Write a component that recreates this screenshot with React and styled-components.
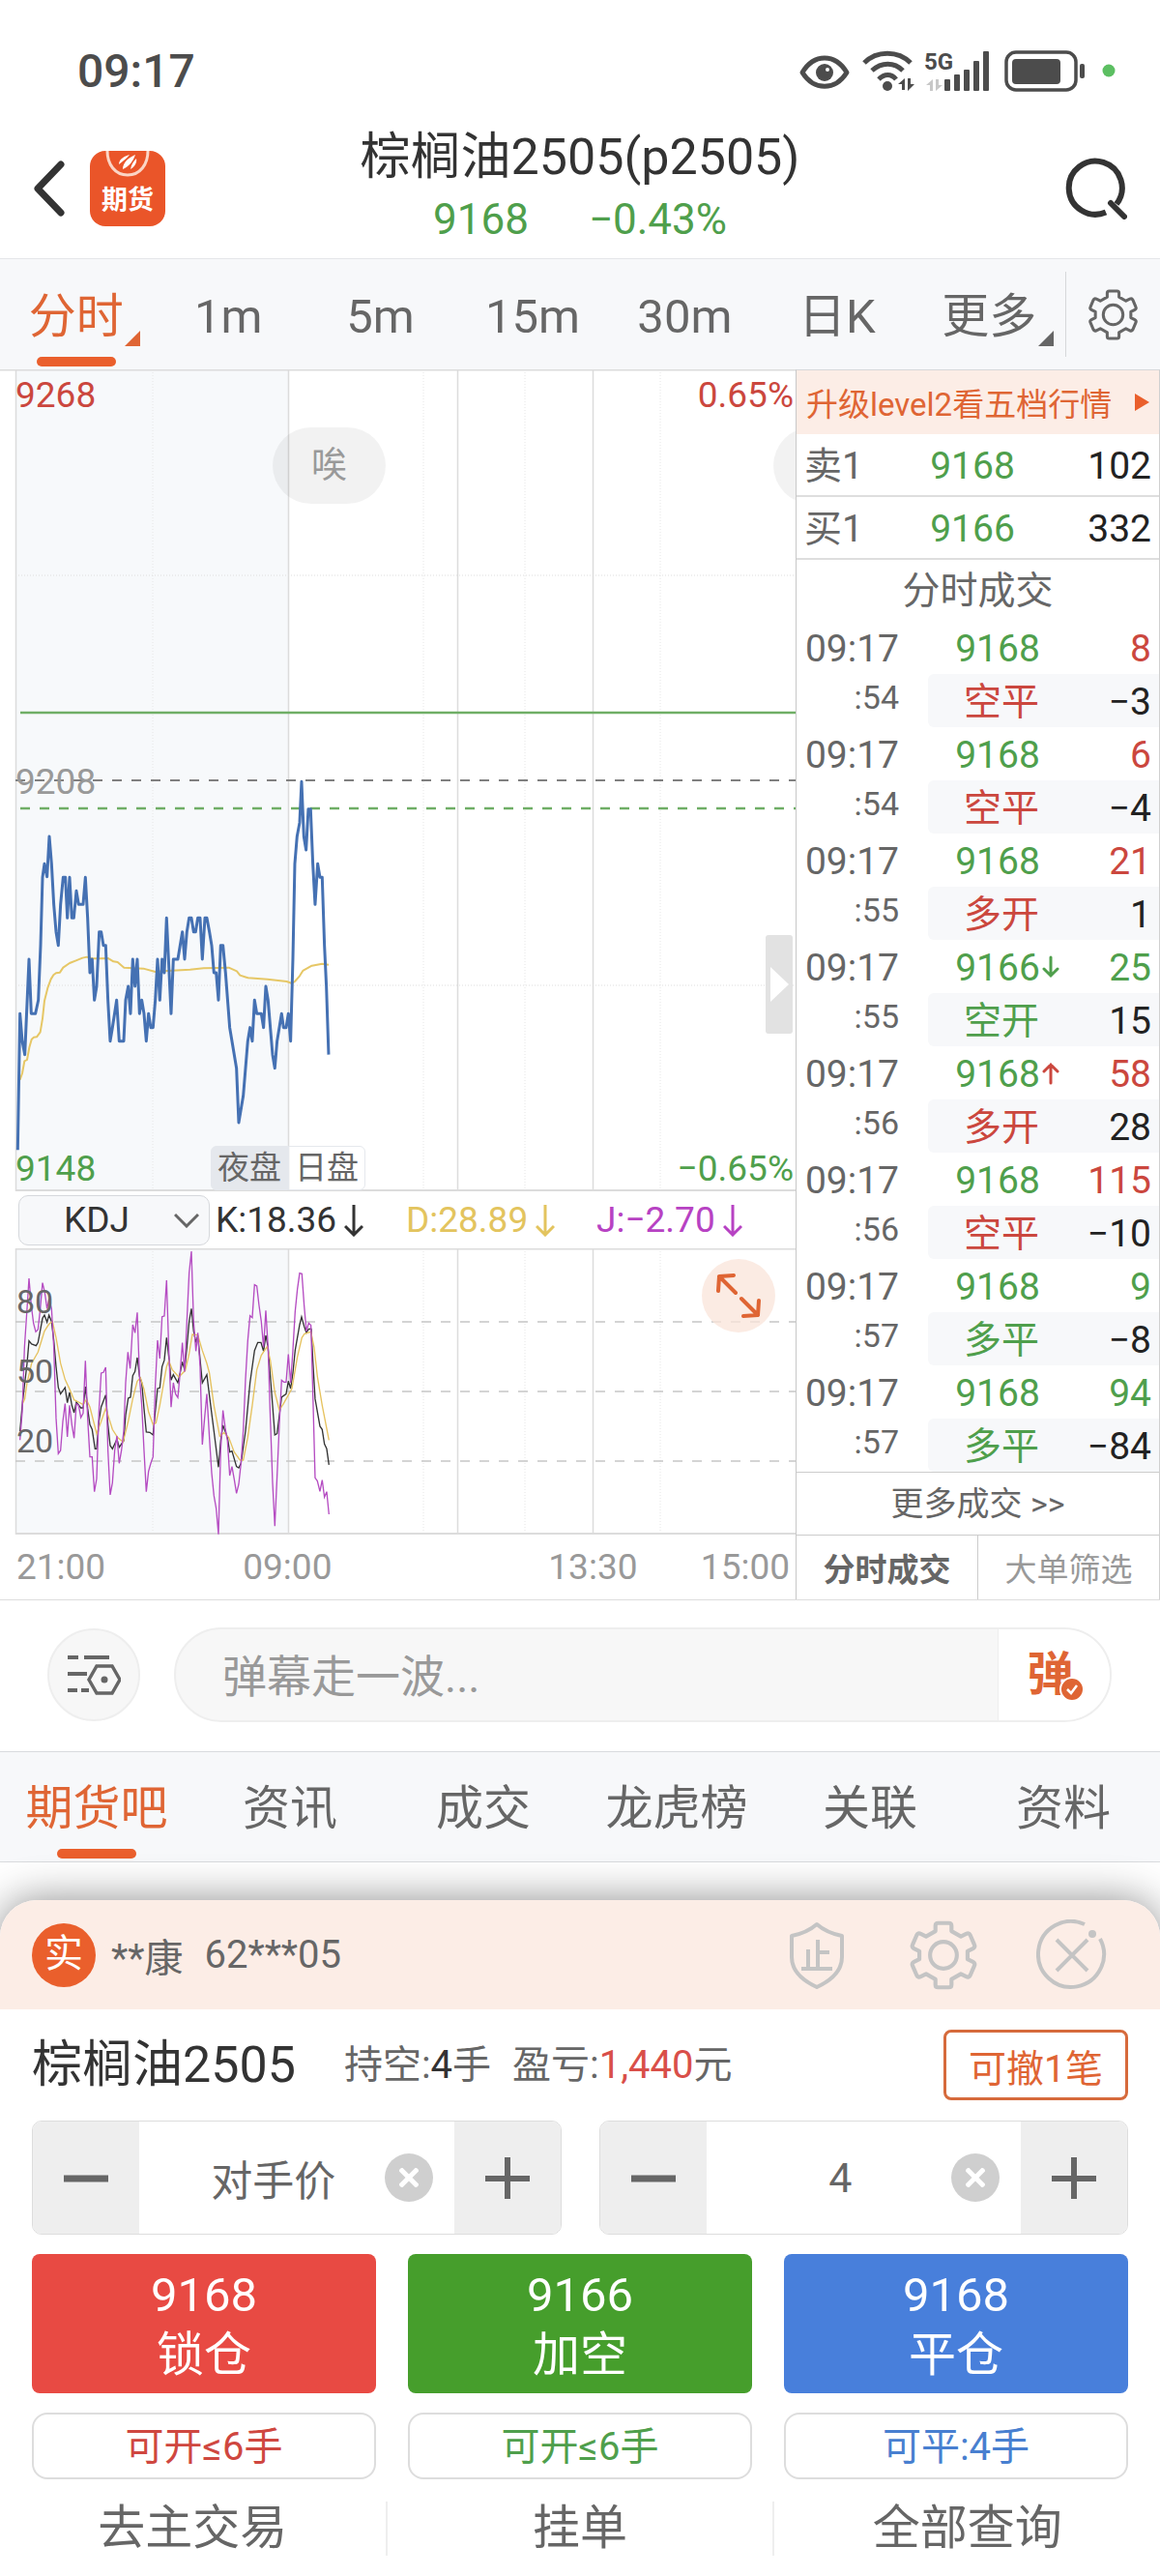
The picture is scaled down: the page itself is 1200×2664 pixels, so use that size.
import React, { useState } from 'react'
import styled, { createGlobalStyle } from 'styled-components';

const colors = {
  red: '#cb473e',
  green: '#4f9f4c',
  orange: '#df6534',
  text: '#333333',
  grey: '#666666',
  light: '#999999',
};

const periods = ['分时', '1m', '5m', '15m', '30m', '日K', '更多'];
const sections = ['期货吧', '资讯', '成交', '龙虎榜', '关联', '资料'];

const quotes = [
  { label: '卖1', price: '9168', volume: '102' },
  { label: '买1', price: '9166', volume: '332' },
];

const trades = [
  { sec: ':54', price: '9168', volume: '8', side: 'red', type: '空平', diff: '−3' },
  { sec: ':54', price: '9168', volume: '6', side: 'red', type: '空平', diff: '−4' },
  { sec: ':55', price: '9168', volume: '21', side: 'red', type: '多开', diff: '1' },
  { sec: ':55', price: '9166', volume: '25', side: 'green', type: '空开', diff: '15', arrow: 'down' },
  { sec: ':56', price: '9168', volume: '58', side: 'red', type: '多开', diff: '28', arrow: 'up' },
  { sec: ':56', price: '9168', volume: '115', side: 'red', type: '空平', diff: '−10' },
  { sec: ':57', price: '9168', volume: '9', side: 'green', type: '多平', diff: '−8' },
  { sec: ':57', price: '9168', volume: '94', side: 'green', type: '多平', diff: '−84' },
];

const orders = [
  { price: '9168', label: '锁仓', limit: '可开≤6手', color: '#e84a43', ink: '#cf4740' },
  { price: '9166', label: '加空', limit: '可开≤6手', color: '#469e2c', ink: '#4f9f4c' },
  { price: '9168', label: '平仓', limit: '可平:4手', color: '#487fdb', ink: '#487fd0' },
];

// series are stored at three units per chart pixel
const priceLine = '55,1228 62,805 69,890 77,932 90,636 97,805 110,805 119,763 126,593 132,382 138,340 146,380 153,255 160,340 167,466 174,551 181,593 188,466 196,382 203,382 209,508 216,382 223,508 229,508 237,424 244,466 258,466 265,382 272,508 279,678 286,636 293,763 300,720 308,551 314,551 321,593 328,593 335,763 342,890 349,848 362,763 370,890 384,890 390,763 398,720 405,805 412,636 419,720 426,636 433,805 440,763 447,805 454,890 461,805 468,848 475,848 482,763 489,636 496,763 503,636 510,678 517,508 531,805 538,636 552,636 566,551 573,636 580,551 587,508 594,508 601,551 607,551 614,508 621,508 628,636 636,508 642,508 650,551 657,593 664,678 671,678 678,763 685,593 692,593 700,678 713,848 734,974 741,1143 755,1060 769,890 776,848 783,890 790,763 797,805 811,805 818,848 825,720 832,763 846,932 853,974 860,890 874,805 880,848 888,848 895,805 902,890 909,636 915,340 922,255 930,212 936,85 943,255 950,297 957,170 964,170 971,340 978,466 986,340 993,382 1000,382 1007,593 1013,720 1020,932';
const averageLine = '62,1010 69,990 76,952 84,948 91,910 98,885 105,878 114,877 125,862 132,820 138,765 148,725 158,698 166,685 174,679 186,677 196,662 216,648 236,640 256,632 270,629 285,634 305,634 335,633 352,643 365,645 385,662 445,665 482,675 520,672 590,668 632,664 710,662 735,673 745,686 770,694 830,698 890,705 906,711 915,705 930,688 940,672 968,656 1000,650 1020,653';
const jLine = '62,928 69,840 76,640 84,520 90,426 97,510 104,565 111,592 118,585 125,520 132,440 139,470 146,520 152,490 160,520 167,640 174,860 181,970 188,960 195,870 202,815 209,918 216,820 223,880 230,922 237,815 244,820 251,858 258,845 265,682 272,860 279,980 286,980 293,1088 300,1048 307,840 314,720 321,718 328,702 335,960 342,1098 349,1060 356,960 363,915 370,1000 377,960 384,900 390,750 397,655 404,706 412,570 419,595 426,532 433,730 440,820 447,960 454,1088 461,1025 468,1000 475,980 482,760 489,618 496,675 503,545 510,543 517,432 524,650 531,826 538,750 545,785 552,796 559,720 566,626 573,716 580,560 587,410 594,342 601,560 608,652 614,595 621,700 628,942 635,860 642,785 650,920 657,1030 664,1100 671,1140 678,1220 685,960 692,836 699,890 706,930 713,1038 720,1010 727,1050 734,1093 741,1065 748,1000 755,900 762,740 769,620 776,542 783,548 790,446 797,450 804,510 811,560 818,640 825,526 832,640 839,860 846,1060 853,1195 860,1040 867,880 874,742 881,748 888,748 895,662 902,750 909,650 916,530 923,460 930,410 937,412 944,510 951,590 958,565 965,572 971,780 978,1045 985,1055 993,1087 1000,1052 1007,1105 1014,1088 1021,1158';
const kLine = '62,900 70,810 84,690 90,620 98,630 112,635 118,625 132,550 138,540 146,562 152,540 160,560 167,620 174,700 181,765 188,785 202,765 209,812 216,780 223,820 230,843 237,810 251,828 258,828 265,762 272,830 279,880 286,895 295,955 300,955 307,870 314,825 328,788 335,880 342,945 349,955 363,925 370,950 384,930 390,850 398,798 405,795 412,728 419,715 426,672 433,730 440,750 447,830 454,903 465,904 475,912 489,768 496,766 503,700 510,680 517,610 524,670 531,742 538,725 552,750 559,720 566,685 573,710 580,640 587,560 594,520 601,590 608,625 614,605 628,750 642,725 650,790 664,900 678,1012 685,930 692,882 706,920 713,965 720,962 734,1010 741,1014 748,1000 762,900 776,750 790,650 800,625 810,625 818,652 825,603 832,640 846,820 853,912 860,908 874,795 888,785 895,745 902,768 909,720 916,650 930,570 936,546 944,575 951,595 958,583 966,583 971,680 978,800 993,885 1000,895 1007,940 1014,955 1021,1005';
const dLine = '70,815 77,800 84,750 98,690 118,655 138,590 152,568 163,560 174,610 188,690 202,740 216,770 230,803 244,810 258,818 268,802 279,825 300,908 314,870 328,830 335,850 349,895 365,920 382,934 398,870 412,800 426,745 436,735 447,770 461,840 475,880 484,875 496,820 510,740 517,700 524,682 535,710 555,732 575,712 587,660 597,600 614,602 628,650 642,690 650,720 664,820 682,916 695,905 710,920 727,965 745,990 755,990 769,920 783,820 797,710 811,665 829,638 839,680 853,780 867,835 880,815 906,768 923,670 937,610 945,598 965,592 975,640 985,730 1000,820 1021,928';

const gearPath = 'M20 2h8q2 0 2 2v4l7 4 4-2q2-1 3 1l3 7q1 2-1 3l-4 2v6l4 2q2 1 1 3l-3 7q-1 2-3 1l-4-2-7 4v4q0 2-2 2h-8q-2 0-2-2v-4l-7-4-4 2q-2 1-3-1l-3-7q-1-2 1-3l4-2v-6l-4-2q-2-1-1-3l3-7q1-2 3-1l4 2 7-4V4q0-2 2-2z';

function Gear({ size, stroke }) {
  return (
    <svg width={size} height={size} viewBox="-2 0 52 52" fill="none" stroke="currentColor" strokeWidth={stroke} strokeLinejoin="round">
      <path d={gearPath} />
      <circle cx="24" cy="26" r="10" />
    </svg>
  )
}

function DownArrow() {
  return (
    <svg width="20" height="34" viewBox="0 0 20 34" fill="none" stroke="currentColor" strokeWidth="3">
      <path d="M10 1v30M1 23l9 9 9-9" />
    </svg>
  )
}

function GridLines({ height }) {
  return (
    <g fill="none">
      <rect x="16" y="0" width="282" height={height} fill="#f7f9fb" />
      <path d={`M158 0V${height}M438 0V${height}M543 0V${height}M683 0V${height}`} stroke="#e6e6e6" strokeDasharray="1 2" />
      <path d={`M16.5 0V${height}M298.5 0V${height}M473.5 0V${height}M613.5 0V${height}`} stroke="#dcdcdc" strokeWidth="1.5" />
    </g>
  )
}

function StatusBar() {
  return (
    <Status>
      <span>09:17</span>
      <svg width="330" height="46" viewBox="0 0 330 46" fill="none">
        <g stroke="#4c4c4c" strokeWidth="5">
          <path d="M4 24C16 4 38 4 50 24C38 43 16 43 4 24z" strokeLinejoin="round" />
          <path d="M68 14C81 1 103 1 116 14M76 22C86 13 99 13 108 22M83 31C89 25 96 25 101 31" />
        </g>
        <circle cx="27" cy="24" r="9" fill="#4c4c4c" />
        <circle cx="30" cy="21" r="2" fill="#ffffff" />
        <circle cx="92" cy="38" r="5" fill="#4c4c4c" />
        <path d="M110 30v12h-3v-6h-4zM113 43V30h3v6h4z" fill="#4c4c4c" />
        <path d="M139 31v12h-3v-6h-4zM142 43V31h3v6h4z" fill="#c8c8c8" />
        <g fill="#4c4c4c">
          <rect x="151" y="31" width="6" height="12" rx="1" />
          <rect x="161" y="26" width="6" height="17" rx="1" />
          <rect x="171" y="21" width="6" height="22" rx="1" />
          <rect x="181" y="12" width="6" height="31" rx="1" />
          <rect x="191" y="2" width="6" height="41" rx="1" />
          <rect x="221" y="10" width="50" height="26" rx="4" />
          <rect x="291" y="15" width="5" height="15" rx="2" />
        </g>
        <text x="130" y="21" fill="#4c4c4c" fontSize="24" fontWeight="700" fontFamily="Roboto, sans-serif">5G</text>
        <rect x="215" y="3" width="72" height="39" rx="10" stroke="#4c4c4c" strokeWidth="3.5" />
        <circle cx="321" cy="22" r="6.5" fill="#5cbf62" />
      </svg>
    </Status>
  )
}

function Header() {
  return (
    <TopBar>
      <TopLeft>
        <IconButton aria-label="返回">
          <svg width="34" height="58" viewBox="0 0 34 58" fill="none" stroke="#333333" strokeWidth="7" strokeLinecap="round" strokeLinejoin="round">
            <path d="M29 4L5 29l24 25" />
          </svg>
        </IconButton>
        <Logo>
          <svg width="46" height="28" viewBox="0 0 46 28" fill="none">
            <path d="M2 0c0 14 8 25 21 25S44 14 44 0" stroke="#fbd5c5" strokeWidth="3" />
            <path d="M14 14c0-6 7-9 11-10-3 4-6 6-11 10zM18 19c0-7 6-12 13-15-2 6-6 12-13 15zM26 19c1-5 3-8 6-11 1 4-2 9-6 11z" fill="#ffffff" />
          </svg>
          期货
        </Logo>
      </TopLeft>
      <Heading>
        <h1>棕榈油2505(p2505)</h1>
        <p><span>9168</span><span>−0.43%</span></p>
      </Heading>
      <TopRight>
        <IconButton aria-label="搜索">
          <svg width="64" height="64" viewBox="0 0 64 64" fill="none" stroke="#333333" strokeWidth="6">
            <path d="M42 56.500A27.500 27.500 0 1 1 53 48" />
            <path d="M47 47l14 14" strokeLinecap="round" />
          </svg>
        </IconButton>
      </TopRight>
    </TopBar>
  )
}

function PriceChart() {
  return (
    <ChartBox>
      <svg viewBox="0 0 823 850">
        <GridLines height={850} />
        <path d="M16 213H823M16 637H823" stroke="#dedede" strokeDasharray="1 2" />
        <path d="M0 .5H823M16 849H823" stroke="#dcdcdc" strokeWidth="2" />
        <path d="M21 355H823" stroke="#6fae66" strokeWidth="2.500" />
        <path d="M16 425H823" stroke="#808080" strokeWidth="2" strokeDasharray="10 10" />
        <path d="M21 454H823" stroke="#6fae66" strokeWidth="2.500" strokeDasharray="10 10" />
        <g transform="translate(0 398) scale(.3333)" fill="none" strokeLinejoin="round">
          <polyline points={averageLine} stroke="#e6c766" strokeWidth="6" />
          <polyline points={priceLine} stroke="#4571b3" strokeWidth="9" />
        </g>
      </svg>
      <Mark $top="9px" $color={colors.red}>9268</Mark>
      <Mark $top="9px" $right $color={colors.red}>0.65%</Mark>
      <Mark $top="409px" $color={colors.light}>9208</Mark>
      <Mark $bottom="5px" $color={colors.green}>9148</Mark>
      <Mark $bottom="5px" $right $color={colors.green}>−0.65%</Mark>
      <Bubble $left="282px">唉</Bubble>
      <Bubble $left="800px" />
      <Sessions>
        <span>夜盘</span>
        <span>日盘</span>
      </Sessions>
      <Handle aria-label="展开">
        <svg width="19" height="36" viewBox="0 0 19 36"><path d="M0 0l19 18L0 36z" fill="#ffffff" /></svg>
      </Handle>
    </ChartBox>
  )
}

function Indicator() {
  return (
    <IndicatorBar>
      <SelectBox>
        <select aria-label="指标" defaultValue="KDJ">
          <option>KDJ</option>
          <option>MACD</option>
        </select>
        <svg width="26" height="16" viewBox="0 0 26 16" fill="none" stroke="#666666" strokeWidth="3">
          <path d="M1 2l12 12L25 2" />
        </svg>
      </SelectBox>
      <Reading $color="#333333">K:18.36<DownArrow /></Reading>
      <Reading $color="#e3c45e">D:28.89<DownArrow /></Reading>
      <Reading $color="#b742c3">J:−2.70<DownArrow /></Reading>
    </IndicatorBar>
  )
}

function KdjChart() {
  return (
    <ChartBox>
      <svg viewBox="0 0 823 296">
        <GridLines height={296} />
        <path d="M16 .5H823M16 295H823" stroke="#dcdcdc" strokeWidth="2" />
        <path d="M16 76H823M16 148H823M16 220H823" stroke="#c6c6c6" strokeWidth="1.500" strokeDasharray="10 10" />
        <g transform="translate(0 -111) scale(.3333)" fill="none" strokeWidth="4">
          <polyline points={kLine} stroke="#333333" />
          <polyline points={dLine} stroke="#e6c25e" />
          <polyline points={jLine} stroke="#b54cc2" />
        </g>
      </svg>
      <Level $top="37px">80</Level>
      <Level $top="109px">50</Level>
      <Level $top="181px">20</Level>
      <Expand aria-label="全屏">
        <svg width="46" height="46" viewBox="0 0 46 46" fill="none" stroke="currentColor" strokeWidth="4" strokeLinecap="round" strokeLinejoin="round">
          <path d="M20 20L3 3M2 18L3 3l15-1M26 26l17 17M44 28l-1 15-15 1" />
        </svg>
      </Expand>
    </ChartBox>
  )
}

function QuotePanel() {
  return (
    <Panel>
      <Upgrade href="#level2">
        升级level2看五档行情
        <svg width="15" height="18" viewBox="0 0 15 18"><path d="M0 0l15 9L0 18z" fill="#ea5f2c" /></svg>
      </Upgrade>
      <QuoteTable>
        <tbody>
          {quotes.map((q) => (
            <tr key={q.label}>
              <td>{q.label}</td>
              <td>{q.price}</td>
              <td>{q.volume}</td>
            </tr>
          ))}
        </tbody>
      </QuoteTable>
      <TradeTable>
        <caption>分时成交</caption>
        {trades.map((t, i) => (
          <tbody key={i}>
            <tr>
              <TimeCell>09:17</TimeCell>
              <PriceCell $color={colors.green}>
                {t.price}
                {t.arrow &&
                  <Tick $color={t.arrow === 'up' ? colors.red : colors.green} viewBox="0 0 18 24">
                    <path d={t.arrow === 'up' ? 'M9 22V3M2 10l7-7 7 7' : 'M9 2v19M2 14l7 7 7-7'} />
                  </Tick>}
              </PriceCell>
              <VolumeCell $color={colors[t.side]}>{t.volume}</VolumeCell>
            </tr>
            <tr>
              <SecondCell>{t.sec}</SecondCell>
              <PriceCell $shade $color={colors[t.side]}>{t.type}</PriceCell>
              <VolumeCell $shade $color="#222222">{t.diff}</VolumeCell>
            </tr>
          </tbody>
        ))}
      </TradeTable>
      <More href="#trades">更多成交 &gt;&gt;</More>
      <PanelTabs>
        <PanelTab $active>分时成交</PanelTab>
        <PanelTab>大单筛选</PanelTab>
      </PanelTabs>
    </Panel>
  )
}

function Danmu() {
  return (
    <DanmuBar>
      <RoundButton aria-label="弹幕设置">
        <svg width="56" height="42" viewBox="0 0 56 42" fill="none" stroke="#666666" strokeWidth="4">
          <path d="M1 3h11M18 3h26M1 20h20M1 37h10M15 37h8" />
          <path d="M31 12h16l8 14-8 14H31l-8-14z" strokeWidth="3.500" />
          <circle cx="39" cy="26" r="3.500" fill="#666666" stroke="none" />
        </svg>
      </RoundButton>
      <DanmuField>
        <input aria-label="弹幕" placeholder="弹幕走一波..." />
        <button aria-label="发送弹幕">
          弹
          <svg width="26" height="26" viewBox="0 0 26 26" fill="none">
            <circle cx="13" cy="13" r="12" fill="#df6534" stroke="#ffffff" strokeWidth="2" />
            <path d="M8 13l4 4 6-8" stroke="#ffffff" strokeWidth="2.500" />
          </svg>
        </button>
      </DanmuField>
    </DanmuBar>
  )
}

function Stepper({ label, value, onChange }) {
  const step = (n) => {
    if (!isNaN(parseInt(value))) onChange(String(parseInt(value) + n));
  }

  return (
    <StepperBox>
      <button aria-label={`${label}减`} onClick={() => step(-1)}>
        <svg width="46" height="46" viewBox="0 0 46 46" stroke="#666666"><path d="M0 24h46" strokeWidth="7" /></svg>
      </button>
      <StepperField>
        <input aria-label={label} value={value} onChange={(e) => onChange(e.target.value)} />
        <Clear aria-label={`清除${label}`} onClick={() => onChange('')}>
          <svg width="20" height="20" viewBox="0 0 20 20" stroke="#ffffff" strokeWidth="5"><path d="M1 1l18 18M19 1L1 19" /></svg>
        </Clear>
      </StepperField>
      <button aria-label={`${label}加`} onClick={() => step(1)}>
        <svg width="46" height="46" viewBox="0 0 46 46" stroke="#666666"><path d="M0 24h46M23 2v43" strokeWidth="6" /></svg>
      </button>
    </StepperBox>
  )
}

function TradeSheet() {
  const [price, setPrice] = useState('对手价');
  const [lots, setLots] = useState('4');

  return (
    <Sheet>
      <SheetHead>
        <Badge>实</Badge>
        <span>**康</span>
        <span>62***05</span>
        <SheetTools>
          <IconButton aria-label="止损">
            <svg width="70" height="70" viewBox="-5 0 70 70" fill="none" stroke="currentColor" strokeWidth="4" strokeLinejoin="round">
              <path d="M30 3c8 7 16 10 26 12v22c0 15-11 24-26 31C15 61 4 52 4 37V15C14 13 22 10 30 3z" />
              <path d="M31 19v30M31 32h12M21 29v20M14 49h32" />
            </svg>
          </IconButton>
          <IconButton aria-label="设置"><Gear size={72} stroke={3} /></IconButton>
          <IconButton aria-label="关闭">
            <svg width="74" height="74" viewBox="0 0 74 74" fill="none" stroke="currentColor" strokeWidth="4">
              <path d="M50 5A34 34 0 1 0 66 20M21 21l32 32M53 21L21 53" />
              <circle cx="58" cy="15" r="4" fill="currentColor" stroke="none" />
            </svg>
          </IconButton>
        </SheetTools>
      </SheetHead>
      <SheetBody>
        <Position>
          <h2>棕榈油2505</h2>
          <p>持空:<b>4</b>手</p>
          <p>盈亏:<em>1,440</em>元</p>
          <CancelButton>可撤1笔</CancelButton>
        </Position>
        <Steppers>
          <Stepper label="价格" value={price} onChange={setPrice} />
          <Stepper label="手数" value={lots} onChange={setLots} />
        </Steppers>
        <Orders>
          {orders.map((o) => (
            <OrderButton key={o.label} $color={o.color}>
              <span>{o.price}</span>
              <span>{o.label}</span>
            </OrderButton>
          ))}
          {orders.map((o) => (
            <Limit key={o.label} $color={o.ink}>{o.limit}</Limit>
          ))}
        </Orders>
      </SheetBody>
      <Links>
        <a href="#trade">去主交易</a>
        <a href="#pending">挂单</a>
        <a href="#query">全部查询</a>
      </Links>
    </Sheet>
  )
}

function App() {
  return (
    <>
      <GlobalStyle />
      <Page>
        <StatusBar />
        <Header />
        <Periods>
          {periods.map((p, i) => (
            <Tab key={p} $active={i === 0}>
              {p}
              {(p === '分时' || p === '更多') &&
                <Corner viewBox="0 0 16 16"><path d="M16 0v16H0z" fill="currentColor" /></Corner>}
            </Tab>
          ))}
          <GearButton aria-label="图表设置"><Gear size={53} stroke={3} /></GearButton>
        </Periods>
        <Market>
          <Charts>
            <PriceChart />
            <Indicator />
            <KdjChart />
            <Axis>
              <span>21:00</span>
              <span>09:00</span>
              <span>13:30</span>
              <span>15:00</span>
            </Axis>
          </Charts>
          <QuotePanel />
        </Market>
        <Danmu />
        <Sections>
          {sections.map((s, i) => (
            <Tab key={s} $active={i === 0}>{s}</Tab>
          ))}
        </Sections>
        <Peek>持仓<em>看多</em>仓持平</Peek>
        <TradeSheet />
      </Page>
    </>
  )
}

const GlobalStyle = createGlobalStyle`
  * {
    box-sizing: border-box;
  }

  body {
    margin: 0;
    background-color: #ffffff;
    color: #333333;
    font-family: Roboto, "Noto Sans CJK SC", sans-serif;
  }

  h1, h2, p {
    margin: 0;
    font-weight: 400;
  }

  button, input, select {
    margin: 0;
    padding: 0;
    border: none;
    background: none;
    color: inherit;
    font: inherit;
  }

  a {
    color: inherit;
    text-decoration: none;
  }

  em, b {
    font-style: normal;
    font-weight: 400;
  }

  table {
    width: 100%;
    border-collapse: collapse;
    table-layout: fixed;
  }

  td {
    padding: 0;
  }

  svg {
    display: block;
    flex-shrink: 0;
  }
`;

const Page = styled.main`
  width: 100%;
  overflow: hidden;
`;

const Status = styled.div`
  display: flex;
  align-items: center;
  justify-content: space-between;
  height: 130px;
  padding: 18px 44px 0 80px;
  color: #4c4c4c;
  font-size: 48px;
  font-weight: 500;
  line-height: 60px;
`;

const TopBar = styled.header`
  display: grid;
  grid-template-columns: 1fr auto 1fr;
  align-items: center;
  height: 137px;
  padding: 0 34px 8px;
`;

const TopLeft = styled.div`
  display: flex;
  align-items: center;
  gap: 25px;
`;

const TopRight = styled.div`
  display: flex;
  justify-content: flex-end;
`;

const IconButton = styled.button`
  display: flex;
`;

const Logo = styled.div`
  display: flex;
  flex-direction: column;
  align-items: center;
  gap: 4px;
  width: 78px;
  height: 78px;
  border-radius: 16px;
  background-color: #ea5529;
  color: #ffffff;
  font-size: 27px;
  font-weight: 700;
  line-height: 38px;
`;

const Heading = styled.div`
  text-align: center;

  h1 {
    font-size: 52px;
    line-height: 64px;
  }

  p {
    display: flex;
    justify-content: center;
    gap: 62px;
    color: ${colors.green};
    font-size: 44px;
    line-height: 64px;
  }
`;

const Periods = styled.nav`
  display: flex;
  height: 115px;
  border-top: 1px solid #e4e6e9;
  background-color: #f7f8fa;
`;

const Tab = styled.button`
  position: relative;
  flex: 1;
  padding-top: 5px;
  color: ${({ $active }) => ($active ? colors.orange : colors.grey)};
  font-size: 49px;
  line-height: 64px;

  &::after {
    content: "";
    display: ${({ $active }) => ($active ? 'block' : 'none')};
    position: absolute;
    bottom: 3px;
    left: calc(50% - 41px);
    width: 82px;
    height: 10px;
    border-radius: 5px;
    background-color: #ea5f2c;
  }
`;

const Corner = styled.svg`
  position: absolute;
  right: 12px;
  bottom: 24px;
  width: 16px;
  height: 16px;
`;

const GearButton = styled.button`
  display: flex;
  align-items: center;
  justify-content: center;
  width: 98px;
  margin: 13px 0;
  border-left: 1px solid #d6d8da;
  color: ${colors.grey};
`;

const Market = styled.section`
  display: grid;
  grid-template-columns: 823fr 377fr;
  border-bottom: 1px solid #dddddd;
`;

const Charts = styled.div`
  min-width: 0;
`;

const ChartBox = styled.div`
  position: relative;
  overflow: hidden;

  > svg {
    width: 100%;
  }
`;

const Mark = styled.span`
  position: absolute;
  top: ${({ $top }) => $top};
  bottom: ${({ $bottom }) => $bottom};
  ${({ $right }) => ($right ? 'right: 2px;' : 'left: 16px;')}
  color: ${({ $color }) => $color};
  font-size: 37px;
  line-height: 36px;
`;

const Bubble = styled.span`
  position: absolute;
  top: 60px;
  left: ${({ $left }) => $left};
  width: 117px;
  height: 79px;
  border-radius: 40px;
  background-color: rgba(0, 0, 0, .05);
  color: ${colors.light};
  font-size: 37px;
  line-height: 79px;
  text-align: center;
`;

const Sessions = styled.div`
  position: absolute;
  bottom: 1px;
  left: 218px;
  display: flex;

  span {
    width: 80px;
    height: 46px;
    border: 1px solid #e5e8ed;
    border-radius: 0 6px 6px 0;
    color: ${colors.grey};
    font-size: 33px;
    line-height: 44px;
    text-align: center;
  }

  span:first-child {
    border-radius: 6px 0 0 6px;
    background-color: #e5e8ed;
  }
`;

const Handle = styled.button`
  position: absolute;
  top: 585px;
  right: 3px;
  display: flex;
  align-items: center;
  justify-content: center;
  width: 28px;
  height: 102px;
  border-radius: 3px;
  background-color: #e2e2e2;
`;

const IndicatorBar = styled.div`
  display: flex;
  align-items: center;
  height: 59px;
  padding-left: 19px;
`;

const SelectBox = styled.div`
  display: flex;
  align-items: center;
  position: relative;
  width: 198px;
  height: 52px;
  margin-right: 6px;
  border: 1px solid #d6d8dc;
  border-radius: 10px;
  background-color: #f7f8fa;

  select {
    width: 100%;
    padding-left: 46px;
    appearance: none;
    font-size: 37px;
    line-height: 48px;
  }

  svg {
    position: absolute;
    right: 10px;
    pointer-events: none;
  }
`;

const Reading = styled.span`
  display: flex;
  align-items: center;
  gap: 8px;
  min-width: 197px;
  color: ${({ $color }) => $color};
  font-size: 37px;
  line-height: 48px;
`;

const Level = styled.span`
  position: absolute;
  top: ${({ $top }) => $top};
  left: 17px;
  color: ${colors.grey};
  font-size: 34px;
  line-height: 36px;
`;

const Expand = styled.button`
  position: absolute;
  top: 11px;
  right: 21px;
  display: flex;
  align-items: center;
  justify-content: center;
  width: 76px;
  height: 76px;
  border-radius: 50%;
  background-color: rgba(250, 228, 218, .75);
  color: ${colors.orange};
`;

const Axis = styled.div`
  display: grid;
  grid-template-columns: 235fr 317fr 158fr auto;
  padding: 10px 6px 9px 17px;
  color: ${colors.light};
  font-size: 37px;
  line-height: 48px;
`;

const Panel = styled.aside`
  display: flex;
  flex-direction: column;
  min-width: 0;
  border-top: 1px solid #d6d8da;
  border-right: 1px solid #d0d0d0;
  border-left: 1px solid #c8c8c8;
`;

const Upgrade = styled.a`
  display: flex;
  align-items: center;
  justify-content: space-between;
  height: 66px;
  padding: 0 10px;
  background-color: #fcede6;
  color: ${colors.orange};
  font-size: 33px;
`;

const QuoteTable = styled.table`
  color: ${colors.green};
  font-size: 39px;
  line-height: 59px;

  tr {
    border-bottom: 2px solid #dedede;
  }

  td {
    padding-top: 4px;
  }

  td:first-child {
    width: 110px;
    padding-left: 8px;
    color: ${colors.grey};
  }

  td:nth-child(2) {
    width: 144px;
    text-align: center;
  }

  td:last-child {
    padding-right: 8px;
    color: #222222;
    text-align: right;
  }
`;

const TradeTable = styled.table`
  font-size: 39px;
  line-height: 51px;

  caption {
    padding-top: 2px;
    color: ${colors.grey};
    line-height: 61px;
  }

  td {
    padding-top: 4px;
  }
`;

const TimeCell = styled.td`
  width: 136px;
  padding-right: 30px;
  color: ${colors.grey};
  text-align: right;
`;

const SecondCell = styled(TimeCell)`
  font-size: 34px;
  line-height: 40px;
  vertical-align: top;
`;

const PriceCell = styled.td`
  position: relative;
  width: 144px;
  padding-left: ${({ $shade }) => ($shade ? '8px' : '0')};
  border-radius: 6px 0 0 6px;
  background-color: ${({ $shade }) => ($shade ? '#f7f8fa' : 'transparent')};
  color: ${({ $color }) => $color};
  text-align: center;
`;

const VolumeCell = styled.td`
  padding-right: 8px;
  background-color: ${({ $shade }) => ($shade ? '#f7f8fa' : 'transparent')};
  color: ${({ $color }) => $color};
  text-align: right;
`;

const Tick = styled.svg`
  position: absolute;
  top: 16px;
  right: 8px;
  width: 18px;
  height: 24px;
  fill: none;
  stroke: ${({ $color }) => $color};
  stroke-width: 3px;
  stroke-linecap: round;
`;

const More = styled.a`
  border-top: 1px solid #cccccc;
  color: ${colors.grey};
  font-size: 34px;
  line-height: 64px;
  text-align: center;
`;

const PanelTabs = styled.div`
  display: flex;
  flex: 1;
  border-top: 1px solid #cccccc;
`;

const PanelTab = styled.button`
  flex: 1;
  color: ${({ $active }) => ($active ? colors.grey : colors.light)};
  font-size: 33px;
  font-weight: ${({ $active }) => ($active ? 700 : 400)};

  & + & {
    border-left: 1px solid #cccccc;
  }
`;

const DanmuBar = styled.section`
  display: flex;
  align-items: center;
  gap: 35px;
  height: 156px;
  padding: 0 50px 2px 49px;
`;

const RoundButton = styled.button`
  display: flex;
  align-items: center;
  justify-content: center;
  width: 96px;
  height: 96px;
  border: 2px solid #eeeeee;
  border-radius: 50%;
  background-color: #f7f7f7;
`;

const DanmuField = styled.div`
  display: flex;
  flex: 1;
  height: 98px;
  overflow: hidden;
  border: 2px solid #eeeeee;
  border-radius: 49px;
  background-color: #f7f7f7;

  input {
    flex: 1;
    min-width: 0;
    padding: 3px 0 0 48px;
    font-size: 46px;
    outline: none;
  }

  input::placeholder {
    color: ${colors.light};
  }

  button {
    position: relative;
    width: 116px;
    padding-right: 8px;
    border-left: 1px solid #eeeeee;
    background-color: #ffffff;
    color: ${colors.orange};
    font-size: 48px;
    font-weight: 700;
    line-height: 88px;
  }

  svg {
    position: absolute;
    right: 26px;
    bottom: 19px;
  }
`;

const Sections = styled.nav`
  display: flex;
  height: 115px;
  border-top: 1px solid #d9dbde;
  border-bottom: 1px solid #d9dbde;
  background-color: #f7f8fa;
`;

const Peek = styled.p`
  height: 39px;
  padding: 34px 37px 0;
  overflow: hidden;
  font-size: 46px;
  line-height: 56px;

  em {
    margin: 0 22px 0 18px;
    color: #e9a284;
  }
`;

const Sheet = styled.section`
  position: relative;
  border-radius: 38px 38px 0 0;
  background-color: #ffffff;
  box-shadow: 0 0 44px rgba(0, 0, 0, .45);
`;

const SheetHead = styled.div`
  display: flex;
  align-items: center;
  height: 113px;
  padding: 0 54px 0 33px;
  border-radius: 38px 38px 0 0;
  background-color: #fcede6;
  color: ${colors.grey};
  font-size: 40px;

  > span {
    margin-right: 22px;
  }
`;

const Badge = styled.div`
  width: 66px;
  height: 66px;
  margin-right: 16px;
  border-radius: 50%;
  background-color: #ea5f2c;
  color: #ffffff;
  line-height: 64px;
  text-align: center;
`;

const SheetTools = styled.div`
  display: flex;
  align-items: center;
  gap: 60px;
  margin-left: auto;
  color: #c4c4c4;
`;

const SheetBody = styled.div`
  padding: 20px 33px;
`;

const Position = styled.div`
  display: flex;
  align-items: center;
  height: 75px;
  margin-bottom: 20px;
  color: ${colors.grey};
  font-size: 40px;

  h2 {
    margin-right: 50px;
    color: ${colors.text};
    font-size: 52px;
    line-height: 68px;
  }

  p {
    margin-right: 22px;
    line-height: 52px;
  }

  b {
    color: ${colors.text};
  }

  em {
    color: #d94f49;
  }
`;

const CancelButton = styled.button`
  width: 191px;
  height: 73px;
  margin-left: auto;
  border: 3px solid #d66a3c;
  border-radius: 8px;
  color: ${colors.orange};
  font-size: 39px;
`;

const Steppers = styled.div`
  display: grid;
  grid-template-columns: 1fr 1fr;
  gap: 39px;
  margin-bottom: 20px;
`;

const StepperBox = styled.div`
  display: flex;
  height: 118px;
  overflow: hidden;
  border: 1px solid #dddddd;
  border-radius: 10px;

  > button {
    display: flex;
    align-items: center;
    justify-content: center;
    width: 110px;
    background-color: #eeeeee;
  }
`;

const StepperField = styled.div`
  position: relative;
  flex: 1;
  min-width: 0;

  input {
    width: 100%;
    height: 100%;
    padding-right: 48px;
    color: ${colors.grey};
    font-size: 43px;
    text-align: center;
    outline: none;
  }
`;

const Clear = styled.button`
  position: absolute;
  top: 33px;
  right: 22px;
  display: flex;
  align-items: center;
  justify-content: center;
  width: 50px;
  height: 50px;
  border-radius: 50%;
  background-color: #cfcfcf;
`;

const Orders = styled.div`
  display: grid;
  grid-template-columns: repeat(3, 1fr);
  gap: 20px 33px;
`;

const OrderButton = styled.button`
  display: flex;
  flex-direction: column;
  align-items: center;
  justify-content: center;
  height: 144px;
  padding-top: 3px;
  border-radius: 8px;
  background-color: ${({ $color }) => $color};
  color: #ffffff;
  font-size: 49px;
  line-height: 62px;
`;

const Limit = styled.div`
  height: 69px;
  border: 2px solid #dddddd;
  border-radius: 16px;
  color: ${({ $color }) => $color};
  font-size: 40px;
  line-height: 68px;
  text-align: center;
`;

const Links = styled.nav`
  display: flex;
  padding: 3px 0 20px;
  color: ${colors.grey};
  font-size: 49px;
  line-height: 56px;

  a {
    flex: 1;
    text-align: center;
  }

  a + a {
    border-left: 2px solid #eeeeee;
  }
`;

export default App;
